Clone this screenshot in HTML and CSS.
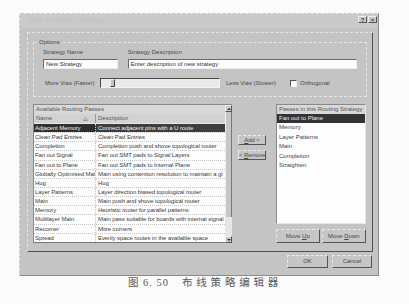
FILE: index.html
```html
<!DOCTYPE html>
<html lang="zh">
<head>
  <meta charset="UTF-8">
  <title>布线策略编辑器</title>
  <link rel="stylesheet" href="styles.css">
</head>
<body>
  <div class="dialog">
    <div class="titlebar">
      <span class="title">Edit Routing Strategy</span>
      <div class="caption-btns">
        <span class="caption-btn">?</span>
        <span class="caption-btn">×</span>
      </div>
    </div>

    <div class="panel">
      <fieldset class="options">
        <legend>Options</legend>
        <div class="fields">
          <div class="field name-field">
            <label>Strategy Name</label>
            <div class="input">New Strategy</div>
          </div>
          <div class="field desc-field">
            <label>Strategy Description</label>
            <div class="input">Enter description of new strategy</div>
          </div>
        </div>
        <div class="slider-row">
          <span class="more-vias">More Vias (Faster)</span>
          <div class="slider">
            <span class="slider-thumb"></span>
          </div>
          <span class="less-vias">Less Vias (Slower)</span>
          <span class="checkbox"></span>
          <span class="check-label">Orthogonal</span>
        </div>
      </fieldset>

      <div class="lower">
        <div class="avail">
          <div class="avail-main">
            <div class="list-head">Available Routing Passes</div>
            <div class="col-head">
              <span class="cell">Name <svg class="sort" width="5" height="4" viewBox="0 0 5 4"><path d="M2.5 0.5 L4.5 3.5 L0.5 3.5 Z" fill="none" stroke="#888" stroke-width="0.8"/></svg></span>
              <span class="cell">Description</span>
            </div>
            <div class="row selected"><span class="cell">Adjacent Memory</span><span class="cell">Connect adjacent pins with a U route</span></div>
            <div class="row"><span class="cell">Clean Pad Entries</span><span class="cell">Clean Pad Entries</span></div>
            <div class="row"><span class="cell">Completion</span><span class="cell">Completion push and shove topological router</span></div>
            <div class="row"><span class="cell">Fan out Signal</span><span class="cell">Fan out SMT pads to Signal Layers</span></div>
            <div class="row"><span class="cell">Fan out to Plane</span><span class="cell">Fan out SMT pads to Internal Plane</span></div>
            <div class="row"><span class="cell">Globally Optimised Mai</span><span class="cell">Main using contention resolution to maintain a gl</span></div>
            <div class="row"><span class="cell">Hug</span><span class="cell">Hug</span></div>
            <div class="row"><span class="cell">Layer Patterns</span><span class="cell">Layer direction biased topological router</span></div>
            <div class="row"><span class="cell">Main</span><span class="cell">Main push and shove topological router</span></div>
            <div class="row"><span class="cell">Memory</span><span class="cell">Heuristic router for parallel patterns</span></div>
            <div class="row"><span class="cell">Multilayer Main</span><span class="cell">Main pass suitable for boards with internal signal</span></div>
            <div class="row"><span class="cell">Recorner</span><span class="cell">Mitre corners</span></div>
            <div class="row last"><span class="cell">Spread</span><span class="cell">Evenly space routes in the available space</span></div>
          </div>
          <div class="vscroll">
            <span class="arrow up"></span>
            <span class="thumb"></span>
            <span class="track"></span>
            <span class="arrow down"></span>
          </div>
        </div>

        <div class="mid-buttons">
          <button class="btn"><u>A</u>dd &gt;</button>
          <button class="btn">&lt; <u>R</u>emove</button>
        </div>

        <div class="strategy">
          <div class="strategy-list">
            <div class="list-head">Passes in this Routing Strategy</div>
            <div class="item selected">Fan out to Plane</div>
            <div class="item">Memory</div>
            <div class="item">Layer Patterns</div>
            <div class="item">Main</div>
            <div class="item">Completion</div>
            <div class="item">Straighten</div>
          </div>
          <div class="move-buttons">
            <button class="btn move-up">Move <u>U</u>p</button>
            <button class="btn move-down">Move <u>D</u>own</button>
          </div>
        </div>
      </div>
    </div>

    <div class="footer">
      <button class="btn ok">OK</button>
      <button class="btn cancel">Cancel</button>
    </div>
  </div>

  <div class="figcap">
    <span class="fig-no">图 6. 50</span>
    <span class="fig-title">布线策略编辑器</span>
  </div>
</body>
</html>
```

FILE: styles.css
```css
* {
  box-sizing: border-box;
}

body {
  margin: 0;
  background: #fbfbfb;
  font-family: "Liberation Sans", Arial, sans-serif;
  font-size: 6px;
  line-height: 8px;
  color: #3c3c3c;
}

.dialog {
  margin: 13px 0 0 19px;
  width: 360px;
  display: flex;
  flex-direction: column;
  background: #c4c4c4;
  border: 1px dashed #e2e2e2;
  border-right: 1px solid #8a8a8a;
  border-bottom: 1px solid #8a8a8a;
}

.titlebar {
  height: 14px;
  display: flex;
  justify-content: space-between;
  align-items: flex-start;
  padding: 2px 1px 0 9px;
  background: #cacaca;
}

.title {
  font-size: 8px;
  color: #c3c3c3;
}

.caption-btns {
  display: flex;
  gap: 1px;
}

.caption-btn {
  width: 9px;
  height: 7px;
  font-size: 6px;
  line-height: 6px;
  font-weight: bold;
  text-align: center;
  color: #444;
  background: #c8c8c8;
  border: 1px solid #eee;
  border-right-color: #555;
  border-bottom-color: #555;
}

/* main frame */
.panel {
  margin: 4px 5px 0 7px;
  padding: 0 5px 8px;
  border: 1px dashed #e4e4e4;
  border-right: 1px solid #505050;
  border-bottom: 1px solid #505050;
}

.options {
  margin: 5px 0 0;
  padding: 2px 9px 8px;
  border: 1px dashed #e6e6e6;
  min-width: 0;
}

.options legend {
  margin-left: -5px;
  padding: 0 1px;
  line-height: 8px;
  color: #444;
}

.fields {
  display: flex;
  gap: 10px;
}

.field label {
  display: block;
  height: 8px;
  color: #4a4a4a;
}

.name-field {
  width: 75px;
}

.desc-field {
  width: 230px;
}

.input {
  margin-top: 3px;
  height: 10px;
  padding-left: 2px;
  line-height: 8px;
  background: #fdfdfd;
  color: #333;
  border: 1px solid #eee;
  border-top-color: #6a6a6a;
  border-left-color: #6a6a6a;
}

.slider-row {
  margin-top: 9px;
  height: 10px;
  display: flex;
  align-items: center;
  color: #4a4a4a;
}

.more-vias {
  width: 57px;
  padding-left: 2px;
}

.slider {
  width: 120px;
  height: 10px;
  display: flex;
  align-items: stretch;
  padding-left: 9px;
  background: #e9e9e9;
  border: 1px solid #f4f4f4;
  border-top-color: #4a4a4a;
  border-left-color: #4a4a4a;
}

.slider-thumb {
  width: 5px;
  background: #c4c4c4;
  border: 1px solid #f0f0f0;
  border-right-color: #444;
  border-bottom-color: #444;
}

.less-vias {
  width: 70px;
  padding-left: 6px;
}

.checkbox {
  width: 7px;
  height: 7px;
  background: #fff;
  border: 1px solid #eee;
  border-top-color: #555;
  border-left-color: #555;
}

.check-label {
  margin-left: 3px;
}

/* lower section */
.lower {
  margin-top: 7px;
  height: 139px;
  display: flex;
}

.avail {
  width: 199px;
  display: flex;
  border-top: 1px solid #8a8a8a;
  border-left: 1px solid #8a8a8a;
}

.avail-main {
  flex: 1;
  min-width: 0;
  background: #fdfdfd;
  overflow: hidden;
}

.list-head {
  height: 9px;
  padding-left: 2px;
  line-height: 9px;
  background: #d8d8d8;
  color: #555;
  white-space: nowrap;
  overflow: hidden;
}

.col-head,
.row {
  display: grid;
  grid-template-columns: 62px 1fr;
}

.col-head {
  height: 10px;
  line-height: 9px;
  background: #d2d2d2;
  color: #555;
  border-bottom: 1px solid #e8e8e8;
}

.cell {
  padding-left: 2px;
  white-space: nowrap;
  overflow: hidden;
}

.col-head .cell:first-child {
  display: flex;
  justify-content: space-between;
  align-items: center;
  padding-right: 7px;
  border-right: 1px solid #999;
}

.row {
  height: 9.15px;
  line-height: 8px;
  letter-spacing: -0.08px;
  border-bottom: 1px dotted #c4c4c4;
}

.row .cell:first-child {
  padding-left: 1px;
  border-right: 1px dotted #c4c4c4;
}

.row.selected .cell:first-child {
  background: #2f2f2f;
  color: #f2f2f2;
}

.row.selected .cell:last-child {
  background: #3d3d3d;
  color: #f2f2f2;
}

.row.last {
  border-bottom-style: solid;
  border-bottom-color: #777;
}

.vscroll {
  width: 7px;
  display: flex;
  flex-direction: column;
  background: #c2c2c2;
}

.arrow {
  height: 7px;
  display: flex;
  align-items: center;
  justify-content: center;
  background: #c8c8c8;
  border: 1px solid #eee;
  border-right-color: #555;
  border-bottom-color: #555;
}

.arrow::after {
  content: "";
  border-left: 2px solid transparent;
  border-right: 2px solid transparent;
}

.arrow.up::after {
  border-bottom: 2px solid #333;
}

.arrow.down::after {
  border-top: 2px solid #333;
}

.thumb {
  flex: 1;
  background: #c6c6c6;
  border-left: 1px solid #eee;
  border-right: 1px solid #777;
}

.track {
  height: 19px;
  background: #e6e6e6;
}

.mid-buttons {
  width: 28px;
  margin: 0 10px 0 6px;
  padding-top: 31px;
  display: flex;
  flex-direction: column;
  gap: 5px;
}

.btn {
  margin: 0;
  padding: 0;
  height: 10px;
  font-family: inherit;
  font-size: 6px;
  line-height: 7px;
  white-space: nowrap;
  color: #474747;
  background: #c6c6c6;
  border: 1px dashed #ececec;
  border-right: 1px solid #555;
  border-bottom: 1px solid #555;
}

.mid-buttons .btn {
  letter-spacing: -0.1px;
}

.strategy {
  width: 90px;
  display: flex;
  flex-direction: column;
}

.strategy-list {
  height: 120px;
  background: #fdfdfd;
  border: 1px solid #e6e6e6;
  border-top-color: #8a8a8a;
  border-left-color: #8a8a8a;
}

.item {
  height: 9.4px;
  padding-left: 2px;
  line-height: 9px;
  color: #444;
}

.item.selected {
  background: #333;
  color: #eee;
}

.move-buttons {
  margin-top: 5px;
  display: flex;
  gap: 2px;
}

.move-buttons .btn {
  height: 14px;
}

.move-up {
  width: 44px;
}

.move-down {
  width: 45px;
}

.footer {
  display: flex;
  justify-content: flex-end;
  gap: 4px;
  padding: 3px 6px 7px 0;
}

.footer .btn {
  height: 13px;
}

.ok {
  width: 41px;
}

.cancel {
  width: 40px;
}

/* figure caption */
.figcap {
  margin: 1px 0 0 128px;
  display: flex;
  font-family: "Liberation Serif", "Noto Sans CJK SC", serif;
  font-size: 10.5px;
  line-height: 12px;
  color: #5a5a5a;
}

.fig-no {
  width: 54px;
  letter-spacing: 1px;
}

.fig-title {
  letter-spacing: 3.8px;
}
```
